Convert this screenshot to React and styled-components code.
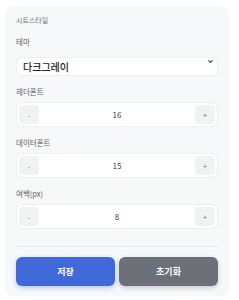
import React, { useState } from 'react';
import styled, { createGlobalStyle } from 'styled-components';

const GlobalStyle = createGlobalStyle`
	body {
		margin: 0;
		background: #ffffff;
		font-family: 'Noto Sans CJK KR', 'Noto Sans', sans-serif;
	}
`;

function Stepper({ value, onChange }) {
	return (
		<StepperBox>
			<StepButton onClick={() => onChange(value - 1)}>-</StepButton>
			<StepValue>{value}</StepValue>
			<StepButton onClick={() => onChange(value + 1)}>+</StepButton>
		</StepperBox>
	);
}

export default function App() {
	const [headerFont, setHeaderFont] = useState(16);
	const [dataFont, setDataFont] = useState(15);
	const [padding, setPadding] = useState(8);

	return (
		<>
			<GlobalStyle />
			<Card>
				<Title>시트스타일</Title>
				<Field>
					<Label>테마</Label>
					<SelectWrap>
						<Select defaultValue="dark">
							<option value="dark">다크그레이</option>
							<option value="light">라이트</option>
						</Select>
						<Chevron viewBox="0 0 10 10">
							<path d="M2.5 3.8 L5 6.3 L7.5 3.8" fill="none" stroke="#444" strokeWidth="1.6" strokeLinecap="round" strokeLinejoin="round" />
						</Chevron>
					</SelectWrap>
				</Field>
				<Field>
					<Label>헤더폰트</Label>
					<Stepper value={headerFont} onChange={setHeaderFont} />
				</Field>
				<Field>
					<Label>데이터폰트</Label>
					<Stepper value={dataFont} onChange={setDataFont} />
				</Field>
				<Field>
					<Label>여백(px)</Label>
					<Stepper value={padding} onChange={setPadding} />
				</Field>
				<Divider />
				<Actions>
					<ActionButton variant="primary">저장</ActionButton>
					<ActionButton variant="secondary">초기화</ActionButton>
				</Actions>
			</Card>
		</>
	);
}

const Card = styled.div`
	display: flex;
	flex-direction: column;
	gap: 10px;
	width: 224px;
	box-sizing: border-box;
	margin: 6px 0 0 5px;
	padding: 9px 11px 10px;
	border-radius: 8px;
	background: #f7f8fa;
`;

const Title = styled.div`
	font-size: 7px;
	line-height: 10px;
	color: #70747b;
	margin-bottom: 1px;
`;

const Field = styled.div`
	display: flex;
	flex-direction: column;
	gap: 5px;
`;

const Label = styled.div`
	font-size: 7.5px;
	line-height: 11px;
	color: #5a5f67;
`;

const SelectWrap = styled.div`
	position: relative;
`;

const Select = styled.select`
	appearance: none;
	width: 100%;
	height: 19px;
	box-sizing: border-box;
	padding: 0 6px;
	border: 1px solid #eceef1;
	border-radius: 5px;
	background: #ffffff;
	font-family: inherit;
	font-size: 10px;
	font-weight: 500;
	color: #1f2329;
	outline: none;
`;

const Chevron = styled.svg`
	position: absolute;
	right: 4px;
	top: 6px;
	width: 7px;
	height: 7px;
	pointer-events: none;
`;

const StepperBox = styled.div`
	display: flex;
	align-items: center;
	height: 25px;
	box-sizing: border-box;
	padding: 0 2px;
	border: 1px solid #eceef1;
	border-radius: 6px;
	background: #ffffff;
`;

const StepButton = styled.button`
	width: 20px;
	height: 19px;
	padding: 0;
	border: none;
	border-radius: 4px;
	background: #f1f2f4;
	font-family: inherit;
	font-size: 7px;
	color: #6b6f76;
	cursor: pointer;
`;

const StepValue = styled.div`
	flex: 1;
	text-align: center;
	font-size: 8px;
	color: #3a3f46;
`;

const Divider = styled.div`
	height: 1px;
	background: #e8eaee;
	margin: 7px 0 0;
`;

const Actions = styled.div`
	display: flex;
	gap: 4px;
`;

const ActionButton = styled.button`
	flex: 1;
	height: 29px;
	border: none;
	border-radius: 6px;
	font-family: inherit;
	font-size: 9px;
	font-weight: 700;
	color: #ffffff;
	background: ${(p) => (p.variant === 'primary' ? '#3f68d8' : '#6b7079')};
	box-shadow: ${(p) =>
		p.variant === 'primary'
			? '0 2px 5px rgba(63, 104, 216, 0.35)'
			: '0 2px 5px rgba(90, 95, 105, 0.3)'};
	cursor: pointer;
`;
